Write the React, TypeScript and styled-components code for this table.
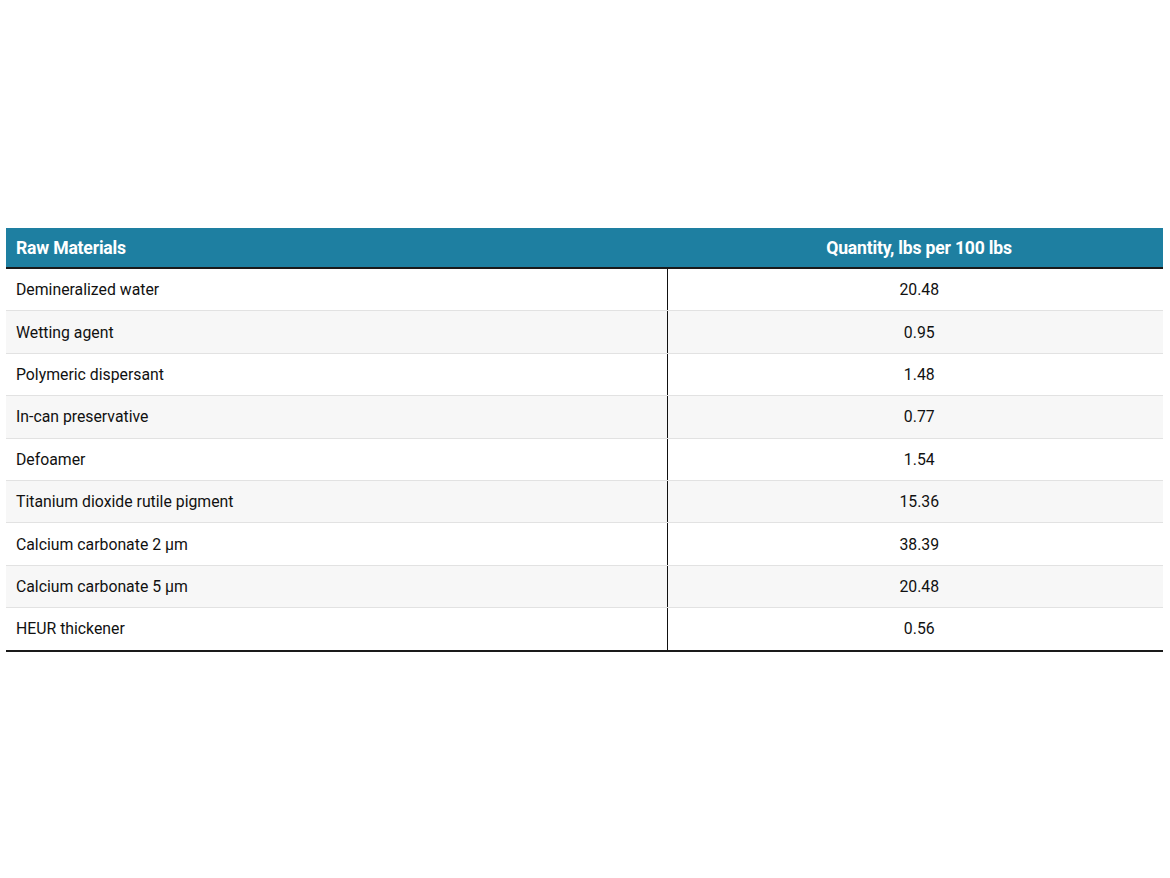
import React from "react";
import styled, { createGlobalStyle } from "styled-components";

const Global = createGlobalStyle`
  html, body { margin: 0; padding: 0; background: #fff; }
  body { font-family: Roboto, "Liberation Sans", Arial, sans-serif; }
`;

const Page = styled.div`
  width: 1170px;
  height: 878px;
  padding: 228px 7px 0 6px;
  box-sizing: border-box;
`;

const Table = styled.table`
  width: 1157px;
  border-collapse: collapse;
  table-layout: fixed;
  border-bottom: 2px solid #1a1a1a;
`;

const HeadCell = styled.th<{ $center?: boolean }>`
  background: #1e7fa1;
  color: #fff;
  font-weight: 700;
  font-size: 17.6px;
  height: 39px;
  padding: ${(p) => (p.$center ? "0 10px 0 18px" : "0 10px")};
  text-align: ${(p) => (p.$center ? "center" : "left")};
  border-bottom: 2px solid #1a1a1a;
  letter-spacing: -0.2px;
`;

const Row = styled.tr<{ $alt: boolean }>`
  background: ${(p) => (p.$alt ? "#f7f7f7" : "#ffffff")};
  &:not(:last-child) > td {
    border-bottom: 1px solid #e2e2e2;
  }
`;

const Cell = styled.td<{ $center?: boolean; $divider?: boolean }>`
  height: 41.4px;
  padding: ${(p) => (p.$center ? "0 10px 0 18px" : "0 10px")};
  font-size: 15.8px;
  color: #111;
  text-align: ${(p) => (p.$center ? "center" : "left")};
  border-right: ${(p) => (p.$divider ? "1px solid #111" : "none")};
`;

const rows: [string, string][] = [
  ["Demineralized water", "20.48"],
  ["Wetting agent", "0.95"],
  ["Polymeric dispersant", "1.48"],
  ["In-can preservative", "0.77"],
  ["Defoamer", "1.54"],
  ["Titanium dioxide rutile pigment", "15.36"],
  ["Calcium carbonate 2 µm", "38.39"],
  ["Calcium carbonate 5 µm", "20.48"],
  ["HEUR thickener", "0.56"],
];

export default function App() {
  return (
    <>
      <Global />
      <Page>
        <Table>
          <colgroup>
            <col style={{ width: 661 }} />
            <col />
          </colgroup>
          <thead>
            <tr>
              <HeadCell>Raw Materials</HeadCell>
              <HeadCell $center>Quantity, lbs per 100 lbs</HeadCell>
            </tr>
          </thead>
          <tbody>
            {rows.map(([name, qty], i) => (
              <Row key={name} $alt={i % 2 === 1}>
                <Cell $divider>{name}</Cell>
                <Cell $center>{qty}</Cell>
              </Row>
            ))}
          </tbody>
        </Table>
      </Page>
    </>
  );
}
